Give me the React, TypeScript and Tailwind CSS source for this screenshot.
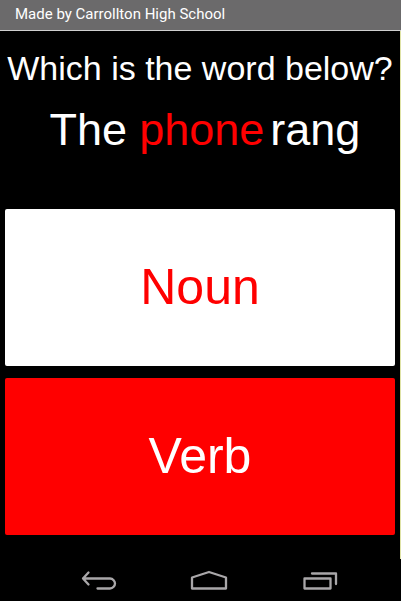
import { useState } from "react";

interface IconProps {
    path: string;
}

interface AnswerButtonProps {
    label: string;
    className: string;
    onClick: () => void;
}

const navItems = [
    { name: "Back", path: "M9.5 13.5 4 19.5l5.5 6M4 19.5h27c3 0 5 3 5 5s-2 5-5 5H18.5" },
    { name: "Home", path: "M3 18.5 20 13l17 5.5v11H3z" },
    { name: "Recent apps", path: "M5.5 19.5h26v10h-26zM13 14.500h24v10.500" },
];

const NavIcon: React.FC<IconProps> = ({ path }) => (
    <svg
        viewBox="0 0 40 42"
        className="w-10 h-[42px]"
        fill="none"
        stroke="currentColor"
        strokeWidth="2.3"
        strokeLinejoin="round"
        strokeLinecap="round"
        aria-hidden="true"
    >
        <path d={path} />
    </svg>
);

const AnswerButton: React.FC<AnswerButtonProps> = ({ label, className, onClick }) => (
    <button
        type="button"
        onClick={onClick}
        className={`flex-1 min-h-20 rounded-xs pb-0.5 text-[50px] leading-[56px] ${className}`}
    >
        {label}
    </button>
);

const App: React.FC = () => {
    const [, setAnswer] = useState("");

    return (
        <div className="min-h-screen flex flex-col bg-black text-white font-['Liberation_Sans',Arial,sans-serif]">
            <header className="h-[31px] shrink-0 flex items-center px-[15px] pb-0.5 bg-[#6b6a6b] border-b border-[#d0d0d0] font-['Roboto',sans-serif] text-[15px] leading-5">
                Made by Carrollton High School
            </header>

            <main className="flex-1 flex flex-col border-r border-[#dfe3a6] pt-[17px] pb-6 px-[5px]">
                <h1 className="text-center text-[34px] leading-10 whitespace-nowrap">
                    Which is the word below?
                </h1>
                <p className="mt-[17px] pl-2.5 flex justify-center text-[45px] leading-[50px]">
                    <span>The</span>
                    <span className="ml-3 mr-1.5 text-[#f00]">phone</span>
                    <span>rang</span>
                </p>

                {/* Answers */}
                <div className="flex-1 flex flex-col gap-3 mt-[54px]">
                    <AnswerButton
                        label="Noun"
                        className="bg-white text-[#f00]"
                        onClick={() => setAnswer("noun")}
                    />
                    <AnswerButton
                        label="Verb"
                        className="bg-[#f00] text-white"
                        onClick={() => setAnswer("verb")}
                    />
                </div>
            </main>

            <nav className="shrink-0 flex justify-center gap-[70px] pl-4 text-[#a9a7a9]">
                {navItems.map((item) => (
                    <button key={item.name} type="button" aria-label={item.name}>
                        <NavIcon path={item.path} />
                    </button>
                ))}
            </nav>
        </div>
    );
};

export default App;
